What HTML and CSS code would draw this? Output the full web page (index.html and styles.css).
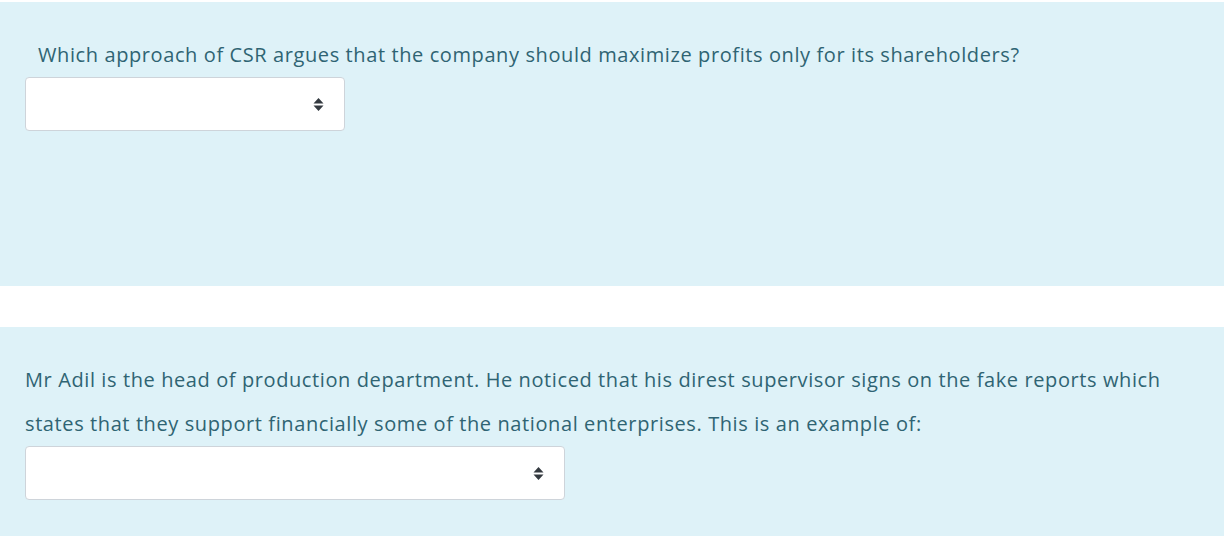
FILE: index.html
```html
<!DOCTYPE html>
<html lang="en">
<head>
<meta charset="utf-8">
<title>Questions</title>
<link rel="stylesheet" href="styles.css">
</head>
<body>
<div class="page">
  <section class="formulation first">
    <p class="qtext indent">Which approach of CSR argues that the company should maximize profits only for its shareholders?</p>
    <div class="select short">
      <svg class="arrows" width="11" height="15" viewBox="0 0 11 15"><path d="M0.5 6.5 L5.5 1 L10.5 6.5 Z M0.5 8.5 L10.5 8.5 L5.5 14 Z" fill="#343a40"/></svg>
    </div>
  </section>
  <section class="formulation second">
    <p class="qtext">Mr Adil is the head of production department. He noticed that his direst supervisor signs on the fake reports which states that they support financially some of the national enterprises. This is an example of:</p>
    <div class="select long">
      <svg class="arrows" width="11" height="15" viewBox="0 0 11 15"><path d="M0.5 6.5 L5.5 1 L10.5 6.5 Z M0.5 8.5 L10.5 8.5 L5.5 14 Z" fill="#343a40"/></svg>
    </div>
  </section>
</div>
</body>
</html>
```
FILE: styles.css
```css
html, body {
  margin: 0;
  padding: 0;
  background: #ffffff;
}
body {
  font-family: "Open Sans", "Noto Sans", sans-serif;
  font-size: 20px;
  color: #2f6473;
}
.page {
  display: flex;
  flex-direction: column;
  gap: 41px;
  padding-top: 2px;
}
.formulation {
  background: #def2f8;
  padding: 31px 25px 0 25px;
  box-sizing: border-box;
}
.first {
  height: 284px;
}
.second {
  height: 209px;
}
.qtext {
  margin: 0;
  line-height: 44px;
  letter-spacing: 0.6px;
  max-width: 1150px;
}
.indent {
  padding-left: 13px;
}
.select {
  background: #ffffff;
  border: 1px solid #ced4da;
  border-radius: 4px;
  height: 54px;
  box-sizing: border-box;
  display: flex;
  align-items: center;
  justify-content: flex-end;
  padding-right: 20px;
}
.short { width: 320px; }
.long { width: 540px; }
.arrows { display: block; }
```
